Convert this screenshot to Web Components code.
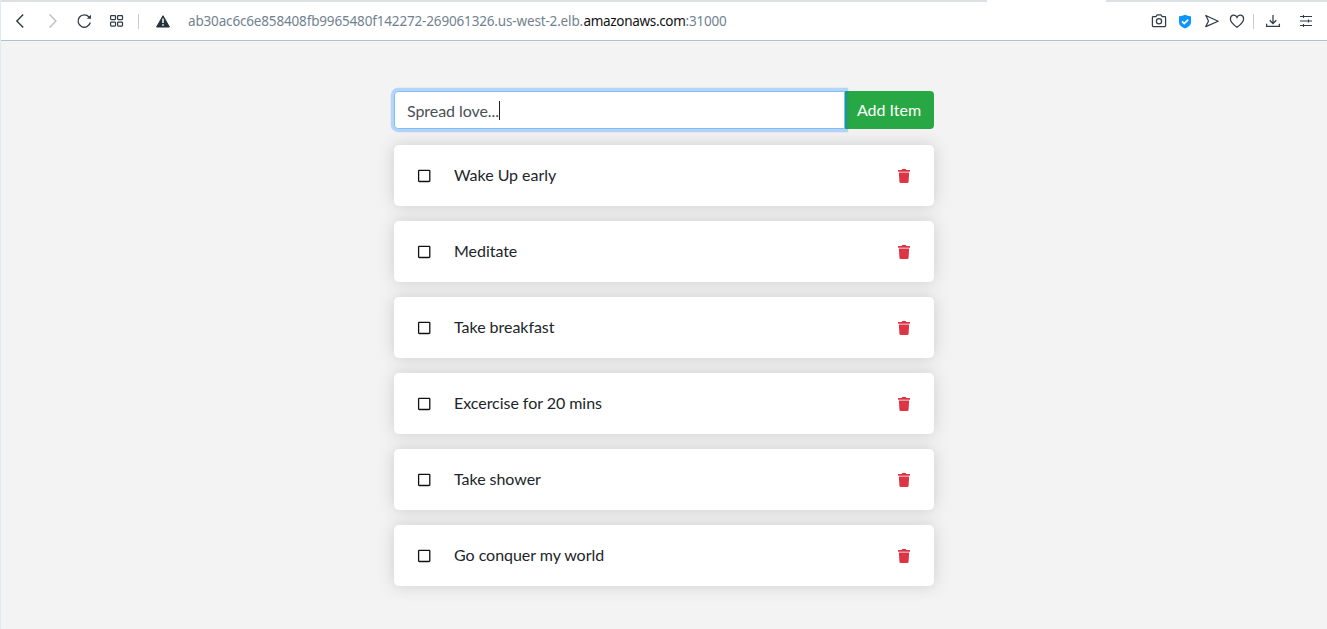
<!DOCTYPE html>
<html lang="en">
<head>
<meta charset="utf-8">
<title>Todo App</title>
<style>
html,body{margin:0;height:100%}
body{background:#f3f3f3;font-family:Lato,"Liberation Sans",sans-serif;font-size:16px;line-height:1.5;color:#212529;overflow:hidden}
</style>
</head>
<body>
<browser-window>
  <address-bar slot="bar"></address-bar>
  <todo-app>
    <todo-form slot="form">Spread love...</todo-form>
    <todo-item>Wake Up early</todo-item>
    <todo-item>Meditate</todo-item>
    <todo-item>Take breakfast</todo-item>
    <todo-item>Excercise for 20 mins</todo-item>
    <todo-item>Take shower</todo-item>
    <todo-item>Go conquer my world</todo-item>
  </todo-app>
</browser-window>
<script>
const define = (name, html) => customElements.define(name, class extends HTMLElement {
  constructor() { super(); this.attachShadow({mode: 'open'}).innerHTML = html; }
});

define('browser-window', `
<style>
:host{display:flex;flex-direction:column;height:629px;box-sizing:border-box;border-left:1px solid #e1eaf3}
main{flex:1;min-height:0}
</style>
<slot name="bar"></slot><main><slot></slot></main>`);

define('address-bar', `
<style>
:host{display:block;background:#fff;height:41px;box-sizing:border-box;border-bottom:1px solid #b1c1cf}
.tabs{height:2px;display:grid;grid-template-columns:986px 119px 1fr}
.tabs i{background:#dae0e4}
.tabs i:nth-child(2){background:#fff}
.row{display:flex;align-items:center;height:38px;padding-right:12px}
svg{width:18px;height:18px;flex:none;display:block;fill:none;stroke:#323c45;stroke-width:1.25}
.nav{display:grid;grid-template-columns:32px 32px 32px 31px;padding-left:10px}
.sep{width:1px;height:15px;background:#ccc}
.warn{margin-left:15px}
.url{font:13.5px/20px "Noto Sans",sans-serif;color:#71828f;margin-left:16px;flex:1;white-space:pre;display:flex}
.a{width:395.5px;letter-spacing:-.16px}.b{width:102px;color:#111;letter-spacing:-.32px}.c{letter-spacing:-.2px}
.actions{display:flex;align-items:center}
</style>
<div class="tabs"><i></i><i></i><i></i></div>
<div class="row">
 <div class="nav">
  <svg viewBox="0 0 18 18"><path d="M12.2 2.5 5.8 9l6.4 6.5" stroke-width="1.4"/></svg>
  <svg viewBox="0 0 18 18" style="stroke:#bbb"><path d="m6.6 2.5 6.4 6.5-6.4 6.5"/></svg>
  <svg viewBox="0 0 18 18"><path d="M15.3 10.5A6.2 6.2 0 1 1 14 5" stroke-width="1.3"/><path d="M16 2.7v4.1h-4.2z" fill="#323c45" stroke="none"/></svg>
  <svg viewBox="0 0 18 18"><rect x="3.6" y="3.6" width="4.9" height="3.9" rx=".7"/><rect x="10.6" y="3.6" width="4.9" height="3.9" rx=".7"/><rect x="3.6" y="10.1" width="4.9" height="3.9" rx=".7"/><rect x="10.6" y="10.1" width="4.9" height="3.9" rx=".7"/></svg>
 </div>
 <div class="sep"></div>
 <svg class="warn" viewBox="0 0 18 18"><path d="M9 3.7 15.4 15H2.6z" fill="#25313b" stroke="#25313b" stroke-linejoin="round" stroke-width="1"/><path d="M9 6.6v4.3M9 12.3v1.5" stroke="#fff" stroke-width="1.5"/></svg>
 <div class="url"><span class="a">ab30ac6c6e858408fb9965480f142272-269061326.us-west-2.elb.</span><span class="b">amazonaws.com</span><span class="c">:31000</span></div>
 <div class="actions">
  <svg viewBox="0 0 18 18"><path d="M3.2 4.6h2.7l1.3-1.8h3.7l1.3 1.8h2.6q.8 0 .8.8v8.4q0 .8-.8.8H3.2q-.8 0-.8-.8V5.4q0-.8.8-.8z"/><circle cx="9" cy="9.3" r="2.6"/></svg>
  <svg viewBox="0 0 18 18" style="margin-left:8px"><path d="M9 2.8q3 1.6 6 1.4v6.3q0 3.5-6 5.9-6-2.4-6-5.9V4.2q3 .2 6-1.4z" fill="#0b96ff" stroke="none"/><path d="m6 9.4 2.2 2.2 4-4" stroke="#fff" stroke-width="1.6"/></svg>
  <svg viewBox="0 0 18 18" style="margin-left:9px"><path d="m2.8 3.5 12.4 5.7-12.4 5.4L5.5 9z" stroke-linejoin="round"/></svg>
  <svg viewBox="0 0 18 18" style="margin-left:7px"><path d="M9 15.3C4.8 12.3 2.4 10.1 2.4 7c0-4.6 5.2-5.2 6.6-1.6C10.4 1.8 15.6 2.4 15.6 7c0 3.1-2.4 5.3-6.6 8.3z"/></svg>
  <div class="sep" style="margin:0 10px 0 7px"></div>
  <svg viewBox="0 0 18 18"><path d="M9 3v8.2M5.7 8.2 9 11.5l3.3-3.3M2.6 11.7v2.6h12.8v-2.6"/></svg>
  <svg viewBox="0 0 18 18" style="margin-left:15px"><path d="M3 4.5h12M3 9h12M3 13.5h12M6.5 2.9v3.2M11.5 7.4v3.2M6.5 11.9v3.2" stroke-width="1.1"/></svg>
 </div>
</div>`);

define('todo-app', `
<style>
:host{display:block;width:540px;margin:0 auto;padding-top:50px}
.list{display:flex;flex-direction:column;gap:15px;margin-top:16px}
</style>
<slot name="form"></slot><div class="list"><slot></slot></div>`);

define('todo-form', `
<style>
:host{display:flex;height:38px}
.field{flex:1;box-sizing:border-box;border:1px solid #80bdff;border-radius:4px 0 0 4px;background:#fff;box-shadow:0 0 0 3.2px rgba(0,123,255,.25);padding:1px 12px 0;line-height:36px;color:#495057;letter-spacing:-.07px;display:flex;align-items:center;position:relative;z-index:1}
.caret{width:1px;height:19px;background:#222}
button{width:89px;border:0;border-radius:0 4px 4px 0;background:#28a745;color:#fff;font:inherit;letter-spacing:-.02px;padding:0 1px 0 0}
</style>
<div class="field"><slot></slot><i class="caret"></i></div><button>Add Item</button>`);

define('todo-item', `
<style>
:host{display:flex;align-items:center;height:61px;box-sizing:border-box;padding:0 24px;background:#fff;border-radius:5px;box-shadow:0 0 16px #ccc}
.name{flex:1;margin-left:24px;padding-bottom:2px;letter-spacing:-.04px}
svg{width:12px;height:14px;margin-top:1px;display:block;overflow:visible}
</style>
<svg viewBox="0 0 12 14"><rect x=".6" y="1.3" width="11.2" height="11.2" rx=".8" fill="none" stroke="#111" stroke-width="1.3"/></svg>
<span class="name"><slot></slot></span>
<svg viewBox="0 0 448 512" preserveAspectRatio="none"><path fill="#dc3545" d="M432 32H312l-9.4-18.7A24 24 0 0 0 281.1 0H166.8a23.7 23.7 0 0 0-21.4 13.3L136 32H16A16 16 0 0 0 0 48v32a16 16 0 0 0 16 16h416a16 16 0 0 0 16-16V48a16 16 0 0 0-16-16zM32 128h384l-21.2 339a48 48 0 0 1-47.9 45H101.1a48 48 0 0 1-47.9-45z"/></svg>`);
</script>
</body>
</html>
